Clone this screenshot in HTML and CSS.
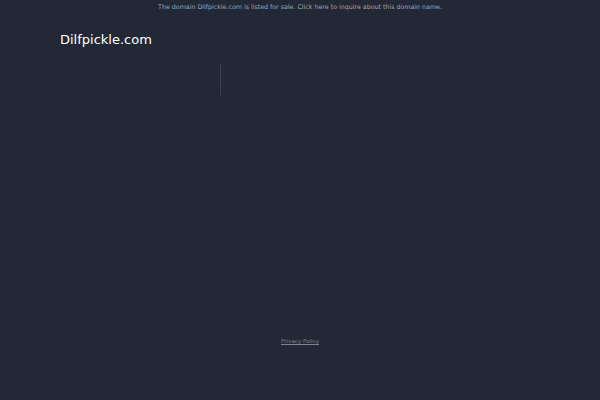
FILE: index.html
```html
<!DOCTYPE html>
<html>
<head>
<meta charset="utf-8">
<link rel="stylesheet" href="styles.css">
</head>
<body>
<div class="topbar">The domain Dilfpickle.com is listed for sale. Click here to inquire about this domain name.</div>
<div class="header"><span class="title">Dilfpickle.com</span></div>
<div class="content">
  <div class="left"></div>
  <div class="right"></div>
</div>
<div class="footer"><a class="privacy" href="#">Privacy Policy</a></div>
</body>
</html>
```
FILE: styles.css
```css
html, body {
  margin: 0;
  padding: 0;
  background: #222835;
  font-family: "DejaVu Sans", sans-serif;
  height: 100%;
}
.topbar {
  height: 14px;
  line-height: 14px;
  font-size: 6.3px;
  color: #a0a6b4;
  text-align: center;
}
.header {
  padding: 15px 0 0 60px;
  height: 34px;
}
.title {
  font-size: 13px;
  color: #ffffff;
  line-height: 18px;
}
.content {
  display: flex;
  padding-left: 60px;
  height: 32px;
}
.left {
  width: 160px;
  border-right: 1px solid #3a4050;
}
.footer {
  margin-top: 243px;
  text-align: center;
  font-size: 5.6px;
}
.privacy {
  color: #7d8494;
}
```
